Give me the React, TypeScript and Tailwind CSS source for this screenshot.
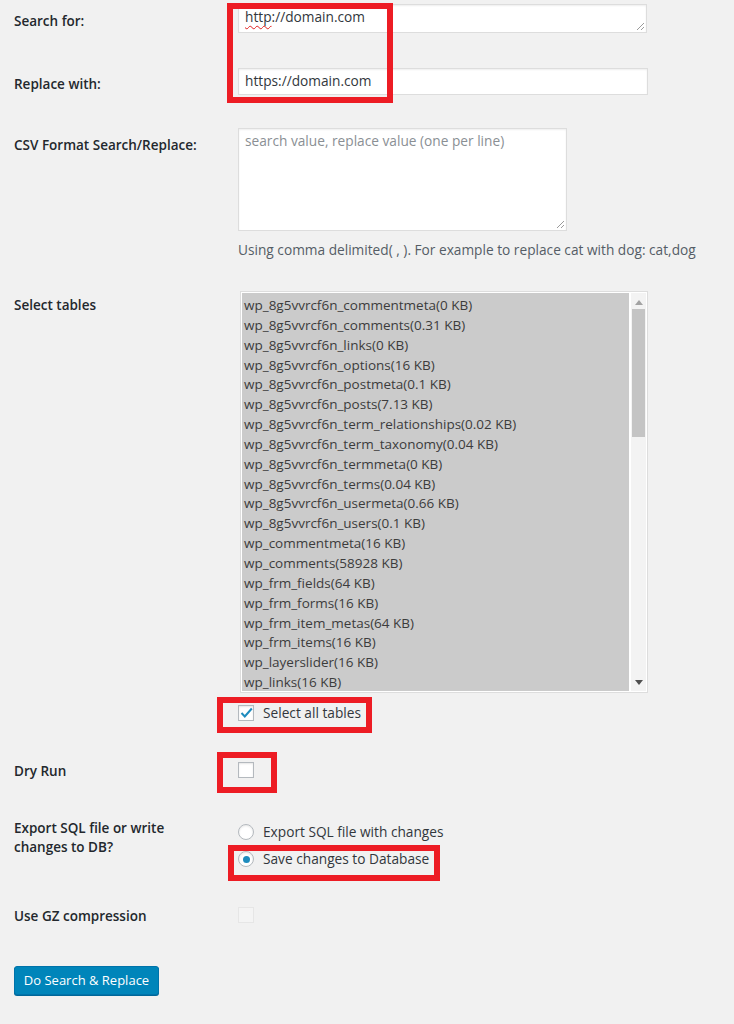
import React from "react";

const tables = [
  "wp_8g5vvrcf6n_commentmeta(0 KB)",
  "wp_8g5vvrcf6n_comments(0.31 KB)",
  "wp_8g5vvrcf6n_links(0 KB)",
  "wp_8g5vvrcf6n_options(16 KB)",
  "wp_8g5vvrcf6n_postmeta(0.1 KB)",
  "wp_8g5vvrcf6n_posts(7.13 KB)",
  "wp_8g5vvrcf6n_term_relationships(0.02 KB)",
  "wp_8g5vvrcf6n_term_taxonomy(0.04 KB)",
  "wp_8g5vvrcf6n_termmeta(0 KB)",
  "wp_8g5vvrcf6n_terms(0.04 KB)",
  "wp_8g5vvrcf6n_usermeta(0.66 KB)",
  "wp_8g5vvrcf6n_users(0.1 KB)",
  "wp_commentmeta(16 KB)",
  "wp_comments(58928 KB)",
  "wp_frm_fields(64 KB)",
  "wp_frm_forms(16 KB)",
  "wp_frm_item_metas(64 KB)",
  "wp_frm_items(16 KB)",
  "wp_layerslider(16 KB)",
  "wp_links(16 KB)",
  "wp_options(1024 KB)",
  "wp_postmeta(2048 KB)",
];

function Label({ children, className = "" }: { children: React.ReactNode; className?: string }) {
  return (
    <div className={`w-[238px] shrink-0 pl-[14px] text-[13.5px] font-semibold leading-5 text-[#23282d] ${className}`}>
      {children}
    </div>
  );
}

function Grip() {
  return (
    <svg className="absolute right-[1px] bottom-[1px]" width="10" height="10" viewBox="0 0 10 10">
      <path d="M9 2 L2 9 M9 6 L6 9" stroke="#9a9a9a" strokeWidth="1" />
    </svg>
  );
}

function RedBox({ className }: { className: string }) {
  return <div className={`pointer-events-none absolute border-[6px] border-[#ed1c24] ${className}`} />;
}

function Checkbox({ checked = false, disabled = false }: { checked?: boolean; disabled?: boolean }) {
  return (
    <div
      className={`flex h-4 w-4 shrink-0 items-center justify-center border ${
        disabled
          ? "border-[#e6e6e6] bg-[#f4f4f4]"
          : "border-[#b4b9be] bg-white shadow-[inset_0_1px_2px_rgba(0,0,0,0.1)]"
      }`}
    >
      {checked && (
        <svg width="13" height="12" viewBox="0 0 13 12">
          <path d="M1.5 6 L4.8 9.5 L11.8 1.5" fill="none" stroke="#1e8cbe" strokeWidth="2" />
        </svg>
      )}
    </div>
  );
}

function Radio({ checked = false }: { checked?: boolean }) {
  return (
    <div className="flex h-4 w-4 shrink-0 items-center justify-center rounded-full border border-[#b4b9be] bg-white shadow-[inset_0_1px_2px_rgba(0,0,0,0.1)]">
      {checked && <div className="h-[7px] w-[7px] rounded-full bg-[#1e8cbe]" />}
    </div>
  );
}

export default function App() {
  return (
    <div className="relative min-h-[1024px] w-[734px] overflow-hidden bg-[#f1f1f1] font-['Open_Sans','Noto_Sans',sans-serif] text-[#32373c]">
      {/* Search for */}
      <div className="flex">
        <Label className="pt-[11px]">Search for:</Label>
        <div className="mt-[4px]">
          <div className="relative h-[29px] w-[409px] border border-[#dddddd] bg-white px-[6px] pt-[1px] text-[13.7px] leading-[22px] shadow-[inset_0_1px_2px_rgba(0,0,0,0.07)]">
            <span className="underline decoration-[#e02020] decoration-wavy decoration-1 underline-offset-[3px]">http</span>
            ://domain.com
            <Grip />
          </div>
        </div>
      </div>

      {/* Replace with */}
      <div className="mt-[35px] flex">
        <Label className="pt-[6px]">Replace with:</Label>
        <div className="flex h-[27px] w-[410px] items-center border border-[#dddddd] bg-white px-[6px] text-[13.7px] shadow-[inset_0_1px_2px_rgba(0,0,0,0.07)]">
          https://domain.com
        </div>
      </div>

      <RedBox className="left-[227px] top-[3px] h-[100px] w-[166px]" />

      {/* CSV */}
      <div className="mt-[33px] flex">
        <Label className="pt-[7px]">CSV Format Search/Replace:</Label>
        <div>
          <div className="relative h-[103px] w-[329px] border border-[#dddddd] bg-white px-[6px] pt-[2px] text-[13.7px] leading-5 text-[#8a8f94] shadow-[inset_0_1px_2px_rgba(0,0,0,0.07)]">
            search value, replace value (one per line)
            <Grip />
          </div>
          <div className="mt-[9px] whitespace-nowrap text-[13.7px] leading-5 text-[#555d66]">
            Using comma delimited( , ). For example to replace cat with dog: cat,dog
          </div>
        </div>
      </div>

      {/* Select tables */}
      <div className="mt-[31px] flex">
        <Label className="pt-[4px]">Select tables</Label>
        <div>
          <div className="ml-[2px] flex h-[402px] w-[408px] border border-[#dddddd] bg-white p-[1px]">
            <div className="h-full flex-1 overflow-hidden bg-[#cbcbcb] pl-[2px] pt-[3px] text-[13.5px] leading-[19.85px] text-[#3c3c3c]">
              {tables.map((t) => (
                <div key={t} className="whitespace-nowrap">
                  {t}
                </div>
              ))}
            </div>
            <div className="ml-[2px] flex h-full w-[15px] flex-col items-center bg-[#f3f3f3]">
              <svg className="mt-[7px]" width="8" height="5" viewBox="0 0 8 5">
                <path d="M0 5 L4 0 L8 5 Z" fill="#a3a3a3" />
              </svg>
              <div className="mt-[4px] h-[128px] w-[13px] bg-[#c4c4c4]" />
              <div className="flex-1" />
              <svg className="mb-[6px]" width="8" height="5" viewBox="0 0 8 5">
                <path d="M0 0 L8 0 L4 5 Z" fill="#505050" />
              </svg>
            </div>
          </div>
          <div className="mt-[10px] flex items-center gap-[9px] text-[13.7px] leading-5 text-[#32373c]">
            <Checkbox checked />
            <span>Select all tables</span>
          </div>
        </div>
      </div>

      <RedBox className="left-[217px] top-[697px] h-[36px] w-[155px]" />

      {/* Dry run */}
      <div className="mt-[38px] flex">
        <Label>Dry Run</Label>
        <div className="mt-[1px]">
          <Checkbox />
        </div>
      </div>

      <RedBox className="left-[217px] top-[752px] h-[41px] w-[60px]" />

      {/* Export */}
      <div className="mt-[38px] flex">
        <Label className="leading-[19px]">
          Export SQL file or write
          <br />
          changes to DB?
        </Label>
        <div className="pt-[3px] text-[13.7px] leading-5 text-[#32373c]">
          <div className="flex items-center gap-[9px]">
            <Radio />
            <span>Export SQL file with changes</span>
          </div>
          <div className="mt-[7px] flex items-center gap-[9px]">
            <Radio checked />
            <span>Save changes to Database</span>
          </div>
        </div>
      </div>

      <RedBox className="left-[228px] top-[845px] h-[36px] w-[212px]" />

      {/* GZ */}
      <div className="mt-[37px] flex">
        <Label>Use GZ compression</Label>
        <div className="mt-[1px]">
          <Checkbox disabled />
        </div>
      </div>

      {/* Submit */}
      <div className="ml-[14px] mt-[40px]">
        <button className="h-[29px] w-[145px] rounded-[3px] border border-[#0073aa] bg-[#0085ba] text-[13px] text-white shadow-[0_1px_0_#006799]">
          Do Search &amp; Replace
        </button>
      </div>
    </div>
  );
}
